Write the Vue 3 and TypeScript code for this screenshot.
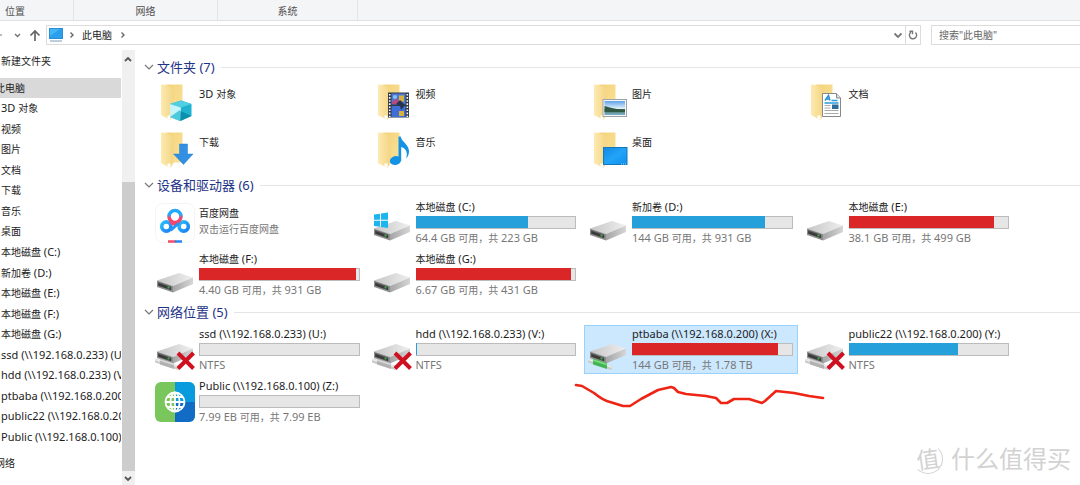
<script setup lang="ts">
import { h, ref } from 'vue'

type IconKind =
  | 'cube' | 'video' | 'picture' | 'document' | 'download' | 'music' | 'desktop'
  | 'netdisk' | 'system' | 'drive' | 'offline' | 'online' | 'globe'

interface Tile {
  name: string
  icon: IconKind
  detail?: string
  used?: number
  full?: boolean
}

interface Group {
  title: string
  kind: 'folders' | 'volumes'
  tiles: Tile[]
}

// Han characters are set one size smaller than the Latin text beside them.
const Label = (props: { text: string }) =>
  h(
    'span',
    { class: 'label' },
    props.text
      .split(/([\u3000-\u9fff\uff00-\uffef]+)/)
      .filter(Boolean)
      .map((run) => (/[\u3000-\u9fff\uff00-\uffef]/.test(run) ? h('span', { class: 'han' }, run) : run)),
  )
Label.props = ['text']

const tabs = ['位置', '网络', '系统']

const places = [
  '3D 对象', '视频', '图片', '文档', '下载', '音乐', '桌面',
  '本地磁盘 (C:)', '新加卷 (D:)', '本地磁盘 (E:)', '本地磁盘 (F:)', '本地磁盘 (G:)',
  'ssd (\\\\192.168.0.233) (U:)', 'hdd (\\\\192.168.0.233) (V:)',
  'ptbaba (\\\\192.168.0.200) (X:)', 'public22 (\\\\192.168.0.200) (Y:)',
  'Public (\\\\192.168.0.100) (Z:)',
]

const groups: Group[] = [
  {
    title: '文件夹 (7)',
    kind: 'folders',
    tiles: [
      { name: '3D 对象', icon: 'cube' },
      { name: '视频', icon: 'video' },
      { name: '图片', icon: 'picture' },
      { name: '文档', icon: 'document' },
      { name: '下载', icon: 'download' },
      { name: '音乐', icon: 'music' },
      { name: '桌面', icon: 'desktop' },
    ],
  },
  {
    title: '设备和驱动器 (6)',
    kind: 'volumes',
    tiles: [
      { name: '百度网盘', icon: 'netdisk', detail: '双击运行百度网盘' },
      { name: '本地磁盘 (C:)', icon: 'system', detail: '64.4 GB 可用，共 223 GB', used: 71 },
      { name: '新加卷 (D:)', icon: 'drive', detail: '144 GB 可用，共 931 GB', used: 84 },
      { name: '本地磁盘 (E:)', icon: 'drive', detail: '38.1 GB 可用，共 499 GB', used: 92, full: true },
      { name: '本地磁盘 (F:)', icon: 'drive', detail: '4.40 GB 可用，共 931 GB', used: 99, full: true },
      { name: '本地磁盘 (G:)', icon: 'drive', detail: '6.67 GB 可用，共 431 GB', used: 98, full: true },
    ],
  },
  {
    title: '网络位置 (5)',
    kind: 'volumes',
    tiles: [
      { name: 'ssd (\\\\192.168.0.233) (U:)', icon: 'offline', detail: 'NTFS', used: 0 },
      { name: 'hdd (\\\\192.168.0.233) (V:)', icon: 'offline', detail: 'NTFS', used: 1 },
      { name: 'ptbaba (\\\\192.168.0.200) (X:)', icon: 'online', detail: '144 GB 可用，共 1.78 TB', used: 92, full: true },
      { name: 'public22 (\\\\192.168.0.200) (Y:)', icon: 'offline', detail: 'NTFS', used: 69 },
      { name: 'Public (\\\\192.168.0.100) (Z:)', icon: 'globe', detail: '7.99 EB 可用，共 7.99 EB', used: 0 },
    ],
  },
]

const folderIcons: IconKind[] = ['cube', 'video', 'picture', 'document', 'download', 'music', 'desktop']
const driveIcons: IconKind[] = ['system', 'drive', 'offline', 'online']

const selected = ref('ptbaba (\\\\192.168.0.200) (X:)')
const query = ref('')
</script>

<template>
  <div class="window">
    <svg class="defs" aria-hidden="true">
      <defs>
        <linearGradient id="folderBack" x1="0" y1="0" x2="1" y2="1">
          <stop offset="0" stop-color="#f3d27a" /><stop offset="1" stop-color="#fbe29a" />
        </linearGradient>
        <linearGradient id="folderFlap" x1="0" y1="0" x2="1" y2="0">
          <stop offset="0" stop-color="#fdeab0" /><stop offset="1" stop-color="#f3d584" />
        </linearGradient>
        <linearGradient id="driveTop" x1="0" y1="0" x2="1" y2="0">
          <stop offset="0" stop-color="#c6c6c6" /><stop offset="0.5" stop-color="#dadada" /><stop offset="1" stop-color="#efefef" />
        </linearGradient>
        <linearGradient id="driveSide" x1="0" y1="0" x2="1" y2="0">
          <stop offset="0" stop-color="#a4a4a4" /><stop offset="1" stop-color="#d6d6d6" />
        </linearGradient>
        <linearGradient id="sky" x1="0" y1="0" x2="0" y2="1">
          <stop offset="0" stop-color="#5fa3e6" /><stop offset="0.55" stop-color="#e4f2fb" />
          <stop offset="0.6" stop-color="#3f6a4a" /><stop offset="1" stop-color="#7fb4cf" />
        </linearGradient>
        <linearGradient id="screen" x1="0" y1="0" x2="1" y2="1">
          <stop offset="0" stop-color="#1487e0" /><stop offset="0.5" stop-color="#22a4f7" /><stop offset="1" stop-color="#0c90ee" />
        </linearGradient>
        <linearGradient id="ringTop" x1="0" y1="0" x2="0" y2="1">
          <stop offset="0.35" stop-color="#25a9fb" /><stop offset="0.6" stop-color="#f5466d" />
        </linearGradient>
        <linearGradient id="ringSide" x1="0" y1="0" x2="1" y2="1">
          <stop offset="0" stop-color="#28c0fb" /><stop offset="1" stop-color="#1c7df5" />
        </linearGradient>
      </defs>
    </svg>

    <nav class="ribbon">
      <button v-for="tab in tabs" :key="tab" class="tab" type="button">{{ tab }}</button>
    </nav>

    <div class="toolbar">
      <div class="history">
        <svg width="44" height="20" viewBox="0 0 44 20" fill="none" stroke="#777" aria-hidden="true">
          <path d="M0 10h2" stroke="#bbb" stroke-width="2" />
          <path d="M15 9l2.500 2.500L20 9" stroke-width="1.500" />
          <path d="M35 16V6M30.500 10.500L35 6l4.500 4.500" stroke="#666" stroke-width="1.700" />
        </svg>
      </div>
      <div class="address">
        <svg width="16" height="16" viewBox="0 0 16 16" aria-hidden="true">
          <rect x="1" y="1" width="14" height="11" fill="#2a8fd8" />
          <rect x="2" y="2" width="12" height="9" fill="#45b5f5" />
          <path d="M2 9L12 2h2v9H2z" fill="#2b9fea" />
          <path d="M2 14h12" stroke="#7d9db5" stroke-width="1" />
        </svg>
        <svg width="6" height="10" viewBox="0 0 6 10" fill="none" stroke="#666" stroke-width="1.400" aria-hidden="true">
          <path d="M1.500 2.500L4 5 1.500 7.500" />
        </svg>
        <a class="crumb" href="#">此电脑</a>
        <svg width="6" height="10" viewBox="0 0 6 10" fill="none" stroke="#666" stroke-width="1.400" aria-hidden="true">
          <path d="M1.500 2.500L4 5 1.500 7.500" />
        </svg>
        <button class="drop" type="button" aria-label="历史记录">
          <svg width="10" height="10" viewBox="0 0 10 10" fill="none" stroke="#777" stroke-width="1.800"><path d="M1.500 3.500L5 7 8.500 3.500" /></svg>
        </button>
        <button class="refresh" type="button" aria-label="刷新">
          <svg width="12" height="12" viewBox="0 0 12 12" fill="none" stroke="#777" stroke-width="1.400">
            <path d="M4 3.200A3.600 3.600 0 1 0 8.400 3.500" /><path d="M2.500 2.300h3v3" />
          </svg>
        </button>
      </div>
      <input v-model="query" class="search" type="search" aria-label="搜索" placeholder="搜索&quot;此电脑&quot;" />
    </div>

    <div class="body">
      <nav class="tree">
        <a class="node first" href="#">新建文件夹</a>
        <a class="node root current" href="#">此电脑</a>
        <ul class="places">
          <li v-for="place in places" :key="place">
            <a class="node" href="#"><Label :text="place" /></a>
          </li>
        </ul>
        <a class="node root" href="#">网络</a>
      </nav>

      <div class="scrollbar" aria-hidden="true">
        <svg width="12" height="20" viewBox="0 0 12 20" fill="none" stroke="#555" stroke-width="1.800"><path d="M3 11l3-3 3 3" /></svg>
        <div class="track"><div class="thumb"></div></div>
        <svg width="12" height="14" viewBox="0 0 12 14" fill="none" stroke="#555" stroke-width="1.800"><path d="M3 6l3 3 3-3" /></svg>
      </div>

      <main class="content">
        <section v-for="group in groups" :key="group.title" :class="['group', group.kind]">
          <h2 class="heading">
            <button class="toggle" type="button">
              <svg width="10" height="10" viewBox="0 0 10 10" fill="none" stroke="#777" stroke-width="1.200"><path d="M1 3l4 4 4-4" /></svg>
              {{ group.title }}
            </button>
          </h2>
          <div class="grid">
            <button
              v-for="tile in group.tiles"
              :key="tile.name"
              type="button"
              :class="['tile', { selected: tile.name === selected, plain: tile.used === undefined }]"
              @click="selected = tile.name"
            >
              <svg class="icon" width="40" height="40" viewBox="0 0 40 40" aria-hidden="true">
                <template v-if="folderIcons.includes(tile.icon)">
                  <path d="M11 2.500h16.500v30H11z" fill="url(#folderBack)" />
                  <path d="M6 2.500l6 .5 6.500 5v25L15.500 38 6 33z" fill="url(#folderFlap)" />
                  <path d="M12.500 33.500h3V38l-3-1.500z" fill="#fff" />
                </template>

                <template v-if="tile.icon === 'cube'">
                  <path d="M15 22l11-3.500L36.500 22v12L25 39l-10-4z" fill="#1fb3cf" />
                  <path d="M15 22l11-3.500L36.500 22 26 25.500z" fill="#50cfe3" />
                  <path d="M15 22l11 3.500L25 39l-10-4z" fill="#c6f3f7" />
                  <path d="M15 35l10-7v11z" fill="#4cc9dc" />
                  <path d="M25.500 39V29l11 5z" fill="#0d8fae" />
                </template>
                <template v-else-if="tile.icon === 'video'">
                  <rect x="16" y="10.500" width="21" height="25" fill="#333844" />
                  <rect x="19.500" y="11.500" width="14" height="11" fill="#4c79d8" />
                  <rect x="19.500" y="24" width="14" height="11" fill="#3f6fd6" />
                  <path d="M20 20l5-4 3 6h-8z" fill="#b54a82" /><circle cx="23" cy="15" r="2" fill="#84c3ee" />
                  <path d="M27 13.500h5v6h-5zM27 29h5v5h-5z" fill="#d7b13c" />
                  <path d="M28 18l5 5-4 5-1-4-4-2z" fill="#28334d" />
                  <path d="M17.700 12v23M35.300 12v23" stroke="#fff" stroke-width="1.600" stroke-dasharray="1.600 1.500" />
                </template>
                <template v-else-if="tile.icon === 'picture'">
                  <rect x="15" y="17.500" width="23.500" height="17" fill="#f6f6f6" stroke="#9da3a8" />
                  <rect x="16.500" y="19" width="20.500" height="14" fill="url(#sky)" />
                  <path d="M16.500 24c5 1 8 3 20.500 4v2H16.500z" fill="#315845" />
                </template>
                <template v-else-if="tile.icon === 'document'">
                  <path d="M17.500 11.500h14l4 4.500v18.500h-18z" fill="#fff" stroke="#85898c" />
                  <path d="M31.500 11.500V16h4" fill="#ddd" stroke="#85898c" />
                  <path d="M20 18.500l3.500-5 1.500 5M21.500 17h3" fill="none" stroke="#2b8fd0" stroke-width="1.500" />
                  <path d="M26.500 18.500h6M19.500 21h14" stroke="#2b9bdc" stroke-width="1.400" />
                  <path d="M19.500 23.500h6M19.500 26h6M19.500 28.500h14M19.500 31.500h14" stroke="#aaa" />
                  <rect x="27" y="22.500" width="6.500" height="4.500" fill="#2e6d99" />
                </template>
                <path v-else-if="tile.icon === 'download'" d="M24.500 14h8v10h5.500L28.500 34.500 18.500 24h6z" fill="#3290e2" stroke="#2a80cc" stroke-width=".5" />
                <template v-else-if="tile.icon === 'music'">
                  <ellipse cx="23.500" cy="30.500" rx="5.700" ry="4.500" fill="#1493e6" transform="rotate(-15 23.500 30.500)" />
                  <path d="M26.500 6.500h2.200c.5 5 8.500 8 8.300 15-.1 3-1.300 5.500-2.800 7 1.500-6 .5-9.500-5-11.500V31h-2.700z" fill="#1493e6" />
                </template>
                <template v-else-if="tile.icon === 'desktop'">
                  <rect x="15.500" y="17.500" width="23.500" height="17" fill="url(#screen)" stroke="#1478bd" />
                  <path d="M33 34h5" stroke="#8fd0fa" stroke-dasharray="1 1" />
                </template>

                <template v-else-if="driveIcons.includes(tile.icon)">
                  <g :transform="tile.icon === 'offline' || tile.icon === 'online' ? 'translate(0 -4)' : undefined">
                    <path d="M2 25.500L24 18l14 4.500-20 8.500z" fill="url(#driveTop)" />
                    <path d="M18 31l20-8.500v6.500l-20 8.500z" fill="url(#driveSide)" />
                    <path d="M2 25.500L18 31v6.500L2 32z" fill="#8d8d8d" />
                    <path d="M3.200 27.300l13 4.500v3.400l-13-4.400z" fill="#3a3a3a" />
                    <path d="M4 27.700l12 4.200" stroke="#6a6a6a" stroke-width=".8" />
                    <rect x="12.500" y="31.500" width="2" height="2" fill="#3fae4b" />
                  </g>
                  <g v-if="tile.icon === 'system'" fill="#1cb5ee">
                    <path d="M2 11.500l6-.8v6H2zM9 10.500l7-1v7.200H9zM2 17.700h6v6l-6-.8zM9 17.700h7v7.200l-7-1z" />
                  </g>
                  <template v-if="tile.icon === 'offline' || tile.icon === 'online'">
                    <path d="M0 30.500l24 7.500" stroke="#c9ccc9" stroke-width="4" />
                    <path d="M0 29.500l24 7.500" stroke="#eceeec" stroke-width="1.500" />
                    <path d="M5 28.500l14 4.500v6L5 34.500z" :fill="tile.icon === 'online' ? '#43b653' : '#b2b2b2'" />
                    <path d="M5 30l14 4.500" :stroke="tile.icon === 'online' ? '#80dc85' : '#dadada'" stroke-width="1.500" />
                  </template>
                  <path v-if="tile.icon === 'offline'" d="M23 23l15.500 15.500M38.500 23L23 38.500" stroke="#cf1020" stroke-width="4" />
                </template>

                <template v-else-if="tile.icon === 'netdisk'">
                  <rect x=".5" y=".5" width="39" height="39" rx="7" fill="#fff" stroke="#f4f4f5" />
                  <g fill="none" stroke-width="3.600">
                    <circle cx="11.300" cy="23.500" r="4.600" stroke="url(#ringSide)" />
                    <circle cx="28.700" cy="23.500" r="4.600" stroke="url(#ringSide)" />
                    <circle cx="20" cy="13.500" r="6" stroke="url(#ringTop)" />
                    <path d="M15.500 19.500l4.500 2 4.500-2" stroke="#f5466d" stroke-width="3" />
                    <path d="M24 20l-8.500 7.500" stroke="#2795fa" stroke-width="3" />
                  </g>
                  <path d="M13 38.500h8" stroke="#f24c62" stroke-width="2.500" /><path d="M20 38.500h7" stroke="#2a86f4" stroke-width="2.500" />
                </template>

                <template v-else-if="tile.icon === 'globe'">
                  <rect width="40" height="40" rx="6" fill="#79c65d" />
                  <path d="M20 0h14a6 6 0 0 1 6 6v14H20z" fill="#0a9ade" />
                  <path d="M20 20h20v14a6 6 0 0 1-6 6H20z" fill="#126bc4" />
                  <g fill="none" stroke="#fff" stroke-width="1.800">
                    <circle cx="20" cy="20" r="9.500" /><ellipse cx="20" cy="20" rx="4.500" ry="9.500" />
                    <path d="M20 10.500v19M10.500 20h19M12 15h16M12 25h16" />
                  </g>
                </template>
              </svg>

              <span class="info">
                <span class="name"><Label :text="tile.name" /></span>
                <span
                  v-if="tile.used !== undefined"
                  class="bar"
                  role="progressbar"
                  :aria-label="tile.name"
                  :aria-valuenow="tile.used"
                >
                  <span :class="['fill', { full: tile.full }]" :style="{ width: tile.used + '%' }"></span>
                </span>
                <span v-if="tile.detail" class="detail"><Label :text="tile.detail" /></span>
              </span>
            </button>
          </div>
        </section>
      </main>
    </div>

    <svg class="scribble" width="260" height="32" viewBox="0 0 260 32" fill="none" aria-hidden="true">
      <path
        d="M6 5l6 1 12 7q10 8 16 9l13 4h7l11-7 17-9 13-3 3 1 4 4 8 2 20 2 10 2 5 5h6l7-4 15 0 13 4 3-2 11-10 18 2 15 3 14 2"
        stroke="#ee2414" stroke-width="2.600" stroke-linecap="round" stroke-linejoin="round"
      />
    </svg>

    <div class="watermark">
      <span class="seal"><span class="glyph">值</span></span>
      <span>什么值得买</span>
    </div>
  </div>
</template>

<style>
body {
  margin: 0;
  background: #fff;
}

.label {
  font-size: 11px;
}

.label .han {
  font-size: 10px;
}
</style>

<style scoped>
.window {
  position: relative;
  display: flex;
  flex-direction: column;
  min-height: 100vh;
  overflow: hidden;
  background: #fff;
  color: #1c1c1c;
  font-family: "Noto Sans", "Noto Sans CJK SC", sans-serif;
  font-size: 10px;
}

button {
  padding: 0;
  border: 0;
  background: none;
  color: inherit;
  font: inherit;
  text-align: left;
}

a {
  color: inherit;
  text-decoration: none;
}

svg {
  display: block;
  flex: none;
}

.defs {
  position: absolute;
  width: 0;
  height: 0;
}

.ribbon {
  display: flex;
  height: 20px;
  border-bottom: 1px solid #dfe0e1;
  background: #f4f5f7;
  color: #505050;
}

.tab {
  width: 140px;
  border-right: 1px solid #e4e5e7;
  text-align: center;
}

.tab:first-child {
  width: 74px;
  padding-left: 5px;
  text-align: left;
}

.tab:nth-child(2) {
  width: 144px;
}

.toolbar {
  display: flex;
  height: 20px;
  padding: 4px 0 5px;
}

.history {
  width: 46px;
}

.address {
  display: flex;
  flex: 1;
  align-items: center;
  box-sizing: border-box;
  padding-left: 1px;
  border: 1px solid #dcdcdc;
}

.address > svg + svg {
  margin-left: 5px;
}

.crumb {
  margin: 0 8px 0 7px;
  line-height: 18px;
}

.drop {
  margin-left: auto;
  padding: 4px 1px;
}

.refresh {
  display: flex;
  align-items: center;
  align-self: stretch;
  margin-left: 1px;
  padding: 0 1px;
  border-left: 1px solid #dcdcdc;
}

.search {
  box-sizing: border-box;
  width: 150px;
  margin: 0 -1px 0 10px;
  padding: 0 7px;
  border: 1px solid #dcdcdc;
  border-radius: 0;
  outline: 0;
  background: #fff;
  font: inherit;
  appearance: none;
}

.search::placeholder {
  color: #666;
  opacity: 1;
}

.body {
  display: flex;
  flex: 1;
}

.tree {
  display: flex;
  flex-direction: column;
  flex: none;
  box-sizing: border-box;
  width: 121px;
  padding-bottom: 12px;
}

.node {
  display: block;
  overflow: hidden;
  padding-left: 1px;
  line-height: 20px;
  white-space: nowrap;
}

.first {
  margin: 1px 0 7px;
}

.root {
  text-indent: -6px;
}

.current {
  background: #d9d9d9;
}

.places {
  display: flex;
  flex: 1;
  flex-direction: column;
  margin: 0 0 6px;
  padding: 0;
  list-style: none;
}

.places li {
  display: grid;
  flex: 1;
  align-items: center;
}

.scrollbar {
  display: flex;
  flex-direction: column;
  flex: none;
  width: 13px;
  margin-left: 1px;
  background: #f0f0f0;
}

.track {
  display: flex;
  flex: 1;
  align-items: flex-end;
}

.thumb {
  width: 100%;
  height: 72%;
  background: #cdcdcd;
}

.content {
  flex: 1;
  min-width: 0;
  padding: 7px 0 0 9px;
}

.heading {
  display: flex;
  align-items: center;
  gap: 6px;
  margin: 0;
  color: #1e3287;
  font-size: 13px;
  font-weight: 400;
  line-height: 20px;
}

.heading::after {
  content: "";
  flex: 1;
  height: 1px;
  background: #e5e5e5;
}

.toggle {
  display: flex;
  align-items: center;
  gap: 3px;
}

.grid {
  display: grid;
  grid-template-columns: repeat(4, minmax(0, 1fr));
  column-gap: 3px;
  padding: 2px 66px 0 7px;
}

.volumes .grid {
  row-gap: 3px;
  padding: 3px 66px 3px 7px;
}

.tile {
  display: flex;
  align-items: center;
  gap: 4px;
  box-sizing: border-box;
  height: 48px;
  padding: 0 4px 0 3px;
  border: 1px solid transparent;
}

.folders .icon {
  margin-bottom: 2px;
}

.volumes .tile {
  height: 49px;
}

.selected {
  border-color: #99d1ff;
  background: #cce8ff;
}

.info {
  display: flex;
  flex: 1;
  flex-direction: column;
  gap: 2px;
  align-self: flex-start;
  min-width: 0;
  padding-top: 1px;
  line-height: 14px;
  white-space: nowrap;
}

.plain .info {
  padding-top: 7px;
}

.name,
.detail {
  display: block;
  height: 14px;
}

.detail {
  color: #777;
}

.bar {
  display: flex;
  box-sizing: border-box;
  height: 13px;
  border: 1px solid #bcbcbc;
  background: #e6e6e6;
}

.fill {
  margin: -1px 0 0 -1px;
  background: #26a0da;
}

.full {
  background: #da2626;
}

.scribble {
  position: absolute;
  top: 380px;
  left: 570px;
  pointer-events: none;
}

.watermark {
  position: absolute;
  right: 9px;
  bottom: 10px;
  display: flex;
  align-items: center;
  gap: 8px;
  color: #d2d2d2;
  font-size: 24px;
  line-height: 32px;
  pointer-events: none;
}

.seal {
  width: 28px;
  border: 1px solid #d2d2d2;
  border-top-color: transparent;
  border-left-color: transparent;
  border-radius: 50%;
  font-size: 23px;
  line-height: 28px;
  text-align: center;
}

.glyph {
  display: block;
  transform: rotate(-8deg);
}
</style>
